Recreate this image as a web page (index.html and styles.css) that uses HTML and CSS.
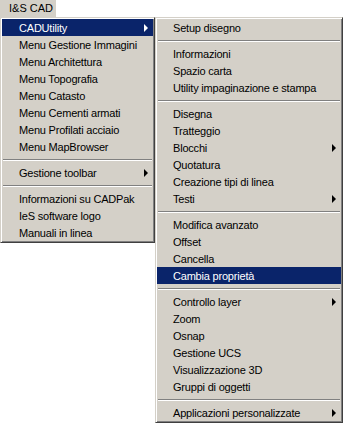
FILE: index.html
```html
<!DOCTYPE html>
<html lang="it">
<head>
    <meta charset="UTF-8">
    <meta name="viewport" content="width=device-width, initial-scale=1.0">
    <title>I&amp;S CAD</title>
    <link rel="stylesheet" href="styles.css">
</head>
<body>
    <div class="menubar">
        <span class="menubar-item">I&amp;S CAD</span>
    </div>

    <div class="menus">
        <ul class="menu menu-main">
            <li class="item selected">CADUtility<span class="arrow"></span></li>
            <li class="item">Menu Gestione Immagini</li>
            <li class="item">Menu Architettura</li>
            <li class="item">Menu Topografia</li>
            <li class="item">Menu Catasto</li>
            <li class="item">Menu Cementi armati</li>
            <li class="item">Menu Profilati acciaio</li>
            <li class="item">Menu MapBrowser</li>
            <li class="sep"></li>
            <li class="item">Gestione toolbar<span class="arrow"></span></li>
            <li class="sep"></li>
            <li class="item">Informazioni su CADPak</li>
            <li class="item">IeS software logo</li>
            <li class="item">Manuali in linea</li>
        </ul>

        <ul class="menu menu-sub">
            <li class="item">Setup disegno</li>
            <li class="sep"></li>
            <li class="item">Informazioni</li>
            <li class="item">Spazio carta</li>
            <li class="item">Utility impaginazione e stampa</li>
            <li class="sep"></li>
            <li class="item">Disegna</li>
            <li class="item">Tratteggio</li>
            <li class="item">Blocchi<span class="arrow"></span></li>
            <li class="item">Quotatura</li>
            <li class="item">Creazione tipi di linea</li>
            <li class="item">Testi<span class="arrow"></span></li>
            <li class="sep"></li>
            <li class="item">Modifica avanzato</li>
            <li class="item">Offset</li>
            <li class="item">Cancella</li>
            <li class="item selected">Cambia proprietà</li>
            <li class="sep"></li>
            <li class="item">Controllo layer<span class="arrow"></span></li>
            <li class="item">Zoom</li>
            <li class="item">Osnap</li>
            <li class="item">Gestione UCS</li>
            <li class="item">Visualizzazione 3D</li>
            <li class="item">Gruppi di oggetti</li>
            <li class="sep"></li>
            <li class="item">Applicazioni personalizzate<span class="arrow"></span></li>
        </ul>
    </div>
</body>
</html>
```

FILE: styles.css
```css
body {
    margin: 0;
    background: #fff;
    font-family: "Liberation Sans", Arial, sans-serif;
    font-size: 11px;
    color: #000;
    width: 343px;
    height: 425px;
    overflow: hidden;
}
.menubar {
    height: 17px;
    display: flex;
}
.menubar-item {
    background: #d4d0c8;
    width: 56px;
    height: 17px;
    line-height: 17px;
    box-sizing: border-box;
    padding-left: 9px;
}
.menus {
    display: flex;
    align-items: flex-start;
}
.menu {
    list-style: none;
    margin: 0;
    padding: 1px;
    background: #d4d0c8;
    border: 1px solid;
    border-color: #d4d0c8 #404040 #404040 #d4d0c8;
    box-shadow: inset 1px 1px #fff, inset -1px -1px #808080;
}
.menu-main {
    width: 155px;
    box-sizing: border-box;
}
.menu-sub {
    flex: 1;
}
.item {
    display: flex;
    align-items: center;
    height: 17px;
    padding: 0 5px 0 17px;
    white-space: nowrap;
    letter-spacing: -0.2px;
}
.menu-sub .item {
    padding-left: 16px;
}
.item.selected {
    background: #0a246a;
    color: #fff;
}
.arrow {
    margin-left: auto;
    width: 0;
    height: 0;
    border-top: 4px solid transparent;
    border-bottom: 4px solid transparent;
    border-left: 4px solid #000;
}
.selected .arrow {
    border-left-color: #fff;
}
.sep {
    height: 9px;
    box-sizing: border-box;
    padding-top: 4px;
    margin: 0 1px;
}
.sep::before {
    content: "";
    display: block;
    height: 1px;
    background: #808080;
    border-bottom: 1px solid #fff;
}
```
